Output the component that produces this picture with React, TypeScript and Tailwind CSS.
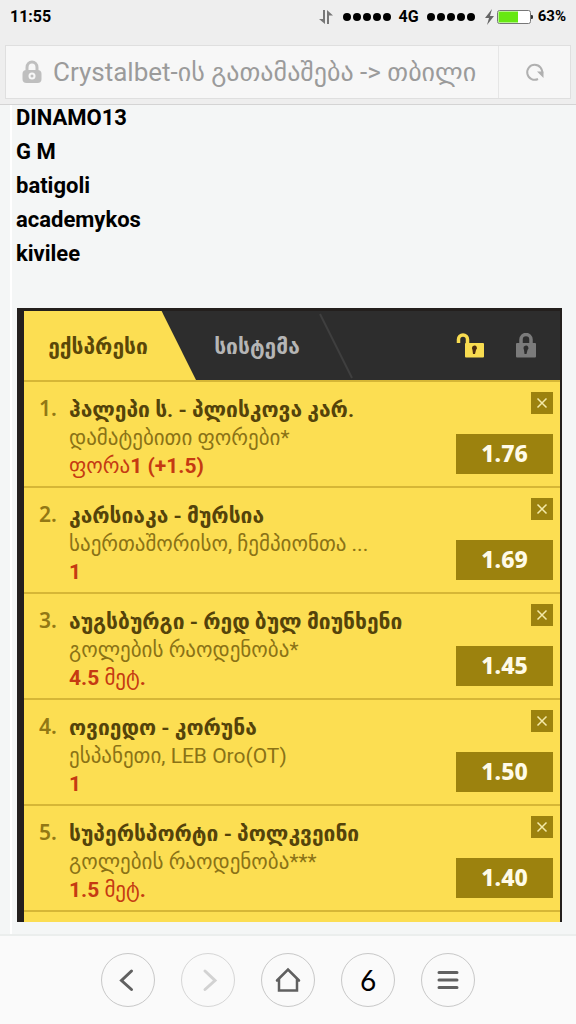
import type { ReactNode } from "react";

type Bet = {
  teams: string;
  market: string;
  pick: ReactNode;
  odds: string;
};

const names = ["DINAMO13", "G M", "batigoli", "academykos", "kivilee"];

const bets: Bet[] = [
  {
    teams: "ჰალეპი ს. - პლისკოვა კარ.",
    market: "დამატებითი ფორები*",
    pick: (
      <>
        ფორა<b>1 (+1.5)</b>
      </>
    ),
    odds: "1.76",
  },
  {
    teams: "კარსიაკა - მურსია",
    market: "საერთაშორისო, ჩემპიონთა ...",
    pick: <b>1</b>,
    odds: "1.69",
  },
  {
    teams: "აუგსბურგი - რედ ბულ მიუნხენი",
    market: "გოლების რაოდენობა*",
    pick: (
      <>
        <b>4.5</b> მეტ<b>.</b>
      </>
    ),
    odds: "1.45",
  },
  {
    teams: "ოვიედო - კორუნა",
    market: "ესპანეთი, LEB Oro(OT)",
    pick: <b>1</b>,
    odds: "1.50",
  },
  {
    teams: "სუპერსპორტი - პოლკვეინი",
    market: "გოლების რაოდენობა***",
    pick: (
      <>
        <b>1.5</b> მეტ<b>.</b>
      </>
    ),
    odds: "1.40",
  },
];

function Dots() {
  return (
    <span aria-hidden className="flex gap-[2px]">
      {[0, 1, 2, 3, 4].map((i) => (
        <i key={i} className="size-2 rounded-full bg-black" />
      ))}
    </span>
  );
}

function StatusBar() {
  return (
    <div className="flex h-[33px] items-center pr-[10px] pl-[10px] text-base font-bold text-black">
      <span className="flex-1">11:55</span>
      <svg aria-hidden width="16" height="16" viewBox="0 0 16 16" className="mr-[9px]" fill="#777">
        <path d="M5 1h2v14L1 10h4zM9 15V1l6 5.500h-4V15z" />
      </svg>
      <Dots />
      <span className="mx-2">4G</span>
      <Dots />
      <svg aria-hidden width="11" height="18" viewBox="0 0 11 18" className="mr-px ml-[9px]" fill="#666">
        <path d="M8 1 1 10h4L3 17l7-9H6z" />
      </svg>
      <svg aria-hidden width="38" height="16" viewBox="0 0 38 16" className="mr-[4px]">
        <rect x="1.500" y="1.500" width="33" height="13" rx="2" fill="#fff" stroke="#777" />
        <path d="M2.500 2.500H22v11H2.500z" fill="#67e812" />
        <path d="M35 6h.5q1.500 0 1.500 1v2q0 1-1.500 1H35z" fill="#333" />
      </svg>
      <span className="text-[15px]">63%</span>
    </div>
  );
}

function AddressBar() {
  return (
    <div className="mx-[5px] mt-[12px] flex h-[54px] border border-[#dfdfdf] bg-[#f7f7f7]">
      <div className="flex min-w-0 flex-1 items-center pr-3 pl-4">
        <svg aria-hidden width="20" height="24" viewBox="0 0 20 24" className="mr-[11px] shrink-0">
          <path d="M5 11V7.500a5 5.500 0 0 1 10 0V11" fill="none" stroke="#bfbfbf" strokeWidth="3" />
          <rect x="0.500" y="10" width="19" height="13" rx="4" fill="#bfbfbf" />
          <circle cx="10" cy="16" r="3.500" fill="#f7f7f7" />
          <circle cx="10" cy="16" r="1.500" fill="#bfbfbf" />
        </svg>
        <input
          aria-label="Address"
          readOnly
          defaultValue="Crystalbet-ის გათამაშება -> თბილი"
          className="w-full min-w-0 bg-transparent text-[26px] text-[#9b9b9b] outline-none"
        />
      </div>
      <button
        type="button"
        aria-label="Reload"
        className="flex w-[72px] items-center justify-center border-l border-[#e6e6e6]"
      >
        <svg aria-hidden width="20" height="20" viewBox="0 0 20 20">
          <path d="M13 17A7.500 7.500 0 1 1 17 12" fill="none" stroke="#b0b0b0" strokeWidth="2" />
          <path d="M12 9.500h6.500V16z" fill="#b0b0b0" />
        </svg>
      </button>
    </div>
  );
}

function SlipTabs() {
  return (
    <div className="flex h-[69px] bg-[#2d2d2d] text-[21px] font-bold">
      <button
        type="button"
        className="w-[172px] bg-[#fcde52] pt-1 pr-6 text-[#5a4708] [clip-path:polygon(0_0,80%_0,100%_100%,0_100%)]"
      >
        ექსპრესი
      </button>
      <button type="button" className="w-[122px] pt-1 text-[#b5b5b5]">
        სისტემა
      </button>
      <svg aria-hidden width="36" height="69" viewBox="0 0 36 69">
        <path d="M2 3 34 67" stroke="#3f3f3f" strokeWidth="2" />
      </svg>
      <div className="flex flex-1 items-center justify-end gap-8 pr-[24px]">
        <button type="button" aria-label="Unlock">
          <svg aria-hidden width="28" height="26" viewBox="0 0 28 26">
            <path d="M2.500 10V6.500a4.500 4.500 0 0 1 9 0V12" fill="none" stroke="#f8dc50" strokeWidth="3.500" />
            <rect x="9" y="10" width="19" height="14.500" rx="1" fill="#f8dc50" />
            <path d="M16 15.500a2.500 2.500 0 1 1 4 1.500L19 21h-2l-.5-4z" fill="#4a2b10" />
          </svg>
        </button>
        <button type="button" aria-label="Lock">
          <svg aria-hidden width="20" height="26" viewBox="0 0 20 26">
            <path d="M5 12V6.500a5 5 0 0 1 10 0V12" fill="none" stroke="#7b7b7b" strokeWidth="3.500" />
            <rect x="0" y="10" width="20" height="14.500" rx="1" fill="#7b7b7b" />
            <path d="M7.500 15.500a2.500 2.500 0 1 1 4 1.500L10.500 21h-2L8 17z" fill="#2d2d2d" />
          </svg>
        </button>
      </div>
    </div>
  );
}

function BetRow({ bet, index }: { bet: Bet; index: number }) {
  return (
    <li className="flex h-[106px] border-t-2 border-[#d6b636] pr-[7px] pl-[15px] text-[21px] leading-7">
      <span className="w-[30px] shrink-0 pt-3 font-[Noto_Sans] font-semibold text-[#927815]">
        {index + 1}.
      </span>
      <div className="min-w-0 flex-1 pt-[14px] whitespace-nowrap">
        <h3 className="font-bold text-[#54430a]">{bet.teams}</h3>
        <p className="text-[#8a7216]">{bet.market}</p>
        <p className="text-[#c53a12]">{bet.pick}</p>
      </div>
      <div className="flex shrink-0 flex-col items-end gap-5 pt-[10px]">
        <button
          type="button"
          aria-label="Remove"
          className="flex size-[22px] items-center justify-center bg-[#9c820e]"
        >
          <svg aria-hidden width="12" height="12" viewBox="0 0 12 12">
            <path d="m1.500 1.500 9 9m0-9-9 9" stroke="#f3e9a8" strokeWidth="1.500" />
          </svg>
        </button>
        <span className="flex h-10 w-[97px] items-center justify-center bg-[#9c820e] pb-[2px] font-[Noto_Sans] text-[23px] font-extrabold text-[#fffbe8]">
          {bet.odds}
        </span>
      </div>
    </li>
  );
}

function BottomNav() {
  const button =
    "flex size-[54px] items-center justify-center rounded-full border border-[#c8c8c8] text-[#606060]";

  return (
    <nav className="flex h-[90px] items-center justify-center gap-[26px] border-t-2 border-[#ebeeed] bg-[#fafafa]">
      <button type="button" aria-label="Back" className={button}>
        <svg aria-hidden width="24" height="24" viewBox="0 0 24 24" fill="none" stroke="currentColor" strokeWidth="3" strokeLinecap="round">
          <path d="M15.500 3 5.500 12.500l10 9" />
        </svg>
      </button>
      <button
        type="button"
        aria-label="Forward"
        className="flex size-[54px] items-center justify-center rounded-full border border-[#d6d6d6] text-[#d2d2d2]"
      >
        <svg aria-hidden width="24" height="24" viewBox="0 0 24 24" fill="none" stroke="currentColor" strokeWidth="3" strokeLinecap="round">
          <path d="m9 3 10 9.500-10 9" />
        </svg>
      </button>
      <button type="button" aria-label="Home" className={button}>
        <svg aria-hidden width="26" height="26" viewBox="0 0 26 26" fill="none" stroke="currentColor" strokeWidth="2.500" strokeLinecap="round">
          <path d="M2 13.500 13 2.500l11 11M4 12v11.500h18V12" />
        </svg>
      </button>
      <button type="button" aria-label="6 tabs" className={`${button} font-[Lato] text-[28px] text-black`}>
        6
      </button>
      <button type="button" aria-label="Menu" className={button}>
        <svg aria-hidden width="24" height="24" viewBox="0 0 24 24" stroke="currentColor" strokeWidth="3" strokeLinecap="round">
          <path d="M3 4.500h18M3 12h18M3 19.500h18" />
        </svg>
      </button>
    </nav>
  );
}

export default function App() {
  return (
    <div className="flex min-h-screen flex-col bg-[#f4f6f6] font-[Roboto,'DejaVu_Sans',sans-serif]">
      <header className="h-[105px] border-b border-[#d4d4d4] bg-[#eeeeee]">
        <StatusBar />
        <AddressBar />
      </header>

      <main className="ml-[10px] flex-1 border-l-2 border-white pt-px pr-[14px] pb-[12px] pl-[4px]">
        <ul className="flex flex-col gap-[10px] text-[22px] leading-6 font-bold text-black">
          {names.map((name) => (
            <li key={name}>{name}</li>
          ))}
        </ul>

        <section className="mt-[42px] ml-px border-t-[3px] border-r-2 border-l-[7px] border-[#231f1d] bg-[#fcde52]">
          <SlipTabs />
          <ol>
            {bets.map((bet, i) => (
              <BetRow key={bet.teams} bet={bet} index={i} />
            ))}
          </ol>
          <div className="h-[12px] border-t-2 border-[#d6b636]" />
        </section>
      </main>

      <BottomNav />
    </div>
  );
}
